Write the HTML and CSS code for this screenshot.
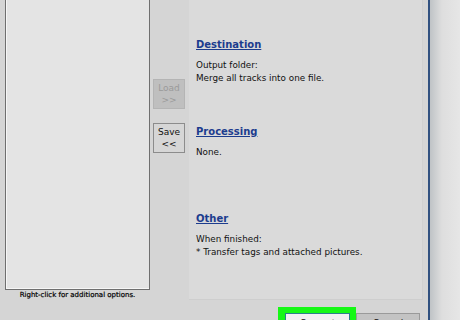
FILE: index.html
```html
<!DOCTYPE html>
<html lang="en">

<head>
    <meta charset="UTF-8" />
    <meta name="viewport" content="width=device-width, initial-scale=1.0" />
    <title>Converter</title>
    <link rel="stylesheet" href="styles.css">
</head>

<body>
    <div class="window">
        <div class="left">
            <div class="listbox"></div>
            <div class="hint">Right-click for additional options.</div>
        </div>

        <div class="middle">
            <button class="side-button" disabled>Load<br>&gt;&gt;</button>
            <button class="side-button">Save<br>&lt;&lt;</button>
        </div>

        <div class="main">
            <div class="panel">
                <a href="#" class="heading heading-destination">Destination</a>
                <p class="info">Output folder:<br>Merge all tracks into one file.</p>

                <a href="#" class="heading heading-processing">Processing</a>
                <p class="info">None.</p>

                <a href="#" class="heading heading-other">Other</a>
                <p class="info">When finished:<br>* Transfer tags and attached pictures.</p>
            </div>
            <div class="actions">
                <div class="highlight">
                    <button class="action-button convert">Convert</button>
                </div>
                <button class="action-button cancel">Cancel</button>
            </div>
        </div>

        <div class="divider"></div>
        <div class="backdrop"></div>
    </div>
</body>

</html>
```

FILE: styles.css
```css
body {
    margin: 0;
    padding: 0;
    width: 460px;
    height: 320px;
    overflow: hidden;
    background-color: #d5d5d5;
    font-family: "DejaVu Sans", Tahoma, sans-serif;
    color: #111;
}

.window {
    display: flex;
    height: 320px;
    overflow: hidden;
}

.left {
    width: 145px;
    padding-left: 5px;
    display: flex;
    flex-direction: column;
    flex-shrink: 0;
}

.listbox {
    height: 289px;
    flex-shrink: 0;
    background-color: #e4e4e4;
    border: 1px solid #6f6f6f;
    border-top: none;
    box-shadow: inset 1px -1px 0 #f6f6f6;
}

.hint {
    font-size: 7px;
    line-height: 11px;
    text-align: center;
    color: #000;
    -webkit-text-stroke: 0.2px #000;
}

.middle {
    width: 39px;
    flex-shrink: 0;
    display: flex;
    flex-direction: column;
    align-items: flex-start;
    gap: 14px;
    padding-top: 79px;
    box-sizing: border-box;
}

.side-button {
    width: 32px;
    height: 30px;
    margin-left: 3px;
    padding: 0;
    font-family: "DejaVu Sans", Tahoma, sans-serif;
    font-size: 9px;
    line-height: 12px;
    color: #111;
    background-color: #d6d6d6;
    border: 1px solid #8c8c8c;
    border-radius: 0;
}

.side-button:disabled {
    color: #9a9a9a;
    background-color: #bfbfbf;
    border-color: #b4b4b4;
}

.main {
    width: 234px;
    flex-shrink: 0;
    display: flex;
    flex-direction: column;
}

.panel {
    height: 300px;
    flex-shrink: 0;
    box-sizing: border-box;
    padding: 38px 0 0 7px;
    background-color: #dadada;
    border-right: 1px solid #d0d0d0;
    border-bottom: 1px solid #cecece;
}

.heading {
    display: block;
    font-size: 10px;
    line-height: 14px;
    font-weight: bold;
    color: #1c3c8e;
    text-decoration: underline;
}

.info {
    margin: 7px 0 0;
    font-size: 8.8px;
    line-height: 13px;
    color: #111;
}

.heading-processing {
    margin-top: 40px;
}

.heading-other {
    margin-top: 53px;
}

.actions {
    display: flex;
    flex-shrink: 0;
    margin-top: 7px;
    padding-left: 89px;
}

.highlight {
    width: 78px;
    height: 20px;
    box-sizing: border-box;
    padding: 6px 0 0 7px;
    background-color: #16f816;
}

.action-button {
    height: 20px;
    padding: 0;
    font-family: "DejaVu Sans", Tahoma, sans-serif;
    font-size: 9px;
    line-height: 12px;
    vertical-align: top;
    color: #111;
    border-radius: 0;
}

.convert {
    width: 65px;
    background-color: #f1f1f1;
    border: 1px solid #2b7f8c;
}

.cancel {
    width: 64px;
    margin-top: 6px;
    background-color: #c3c3c3;
    border: 1px solid #9a9a9a;
}

.divider {
    width: 5px;
    flex-shrink: 0;
    border-right: 2px solid #30507f;
}

.backdrop {
    flex: 1;
    background: linear-gradient(to right, #bfc3c6, #dedede 40%, #e6e6e6);
}
```
